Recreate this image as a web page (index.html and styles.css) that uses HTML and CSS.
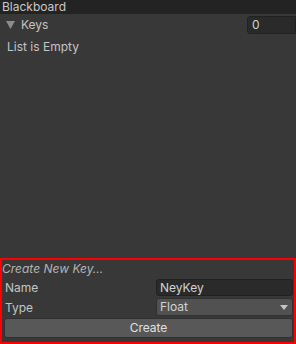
FILE: index.html
```html
<!DOCTYPE html>
<html lang="en">
<head>
	<meta charset="UTF-8">
	<title>Blackboard</title>
	<link rel="stylesheet" href="styles.css">
</head>
<body>
	<div class="board">
		<div class="board-title">Blackboard</div>
		<div class="keys-row">
			<svg class="foldout" width="9" height="8" viewBox="0 0 9 8"><polygon points="0,0 9,0 4.5,8" fill="#8c8c8c"/></svg>
			<span class="keys-label">Keys</span>
			<div class="count-field">0</div>
		</div>
		<div class="empty">List is Empty</div>
		<div class="spacer"></div>
		<div class="create-panel">
			<div class="create-title">Create New Key...</div>
			<div class="field-row">
				<span class="field-label">Name</span>
				<div class="text-field">NeyKey</div>
			</div>
			<div class="field-row">
				<span class="field-label">Type</span>
				<div class="dropdown">Float<span class="arrow"></span></div>
			</div>
			<div class="button">Create</div>
		</div>
	</div>
</body>
</html>
```
FILE: styles.css
```css
* {
	margin: 0;
	padding: 0;
	box-sizing: border-box;
}
body {
	width: 296px;
	height: 344px;
	background-color: #383838;
	font-family: Inter, "Noto Sans", sans-serif;
	font-size: 12px;
	color: #c4c4c4;
	overflow: hidden;
}
.board {
	display: flex;
	flex-direction: column;
	height: 344px;
}
.board-title {
	height: 14px;
	line-height: 14px;
	padding-left: 2px;
	background-color: #232323;
	color: #c8c8c8;
}
.keys-row {
	display: flex;
	align-items: center;
	height: 19px;
	margin-top: 1px;
	padding-left: 6px;
}
.foldout {
	margin-right: 6px;
	flex-shrink: 0;
}
.keys-label {
	flex: 1;
}
.count-field {
	width: 49px;
	height: 18px;
	line-height: 16px;
	padding-left: 4px;
	background-color: #2a2a2a;
	border: 1px solid #212121;
	border-radius: 3px 0 0 3px;
	color: #d2d2d2;
}
.empty {
	padding: 5px 0 0 7px;
	height: 19px;
	line-height: 15px;
}
.spacer {
	flex: 1;
}
.create-panel {
	border: 2px solid #ff0000;
	height: 86px;
	display: flex;
	flex-direction: column;
	padding: 1px 1px 2px 0;
}
.create-title {
	font-style: italic;
	height: 16px;
	line-height: 16px;
	color: #b4b4b4;
}
.field-row {
	display: flex;
	align-items: center;
	height: 20px;
	padding-left: 3px;
}
.field-label {
	width: 151px;
}
.text-field {
	flex: 1;
	height: 17px;
	line-height: 15px;
	padding-left: 3px;
	background-color: #2a2a2a;
	border: 1px solid #212121;
	border-radius: 3px;
	color: #d2d2d2;
}
.dropdown {
	flex: 1;
	height: 18px;
	line-height: 16px;
	padding-left: 3px;
	background-color: #515151;
	border: 1px solid #303030;
	border-radius: 3px;
	color: #d2d2d2;
	display: flex;
	align-items: center;
	justify-content: space-between;
}
.arrow {
	width: 0;
	height: 0;
	border-left: 4px solid transparent;
	border-right: 4px solid transparent;
	border-top: 5px solid #c4c4c4;
	margin-right: 4px;
}
.button {
	margin: 1px 0 0 2px;
	height: 20px;
	line-height: 18px;
	text-align: center;
	background-color: #585858;
	border: 1px solid #303030;
	border-radius: 3px;
	color: #e0e0e0;
}
```
